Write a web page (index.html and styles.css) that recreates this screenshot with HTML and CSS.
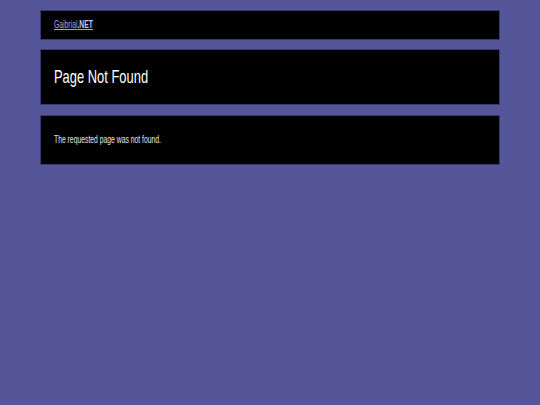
FILE: index.html
```html
<!DOCTYPE html>
<html>
<head>
<meta charset="utf-8">
<title>Page Not Found</title>
<link rel="stylesheet" href="styles.css">
</head>
<body>
<div class="wrap">
  <div class="box header"><a class="site narrow" href="#">Gaibrial<b>.NET</b></a></div>
  <div class="box title"><h1 class="narrow">Page Not Found</h1></div>
  <div class="box content"><p class="narrow">The requested page was not found.</p></div>
</div>
</body>
</html>
```
FILE: styles.css
```css
html, body { margin: 0; padding: 0; }
body {
  background: #555599;
  font-family: "Liberation Sans", Arial, sans-serif;
  color: #fff;
}
.wrap {
  width: 460px;
  margin: 0 auto;
  padding-top: 10px;
  display: flex;
  flex-direction: column;
}
.box {
  background: #000;
  border: 1px solid #3a3a70;
  box-sizing: border-box;
  padding: 0 13px;
  display: flex;
  align-items: center;
}
.narrow {
  display: inline-block;
  transform-origin: left center;
  white-space: nowrap;
}
.header { height: 30px; padding-bottom: 2px; }
.title { height: 56px; margin-top: 9px; }
.content { height: 50px; margin-top: 10px; padding-bottom: 2px; }
.site {
  color: #a4a4f0;
  font-size: 10px;
  text-decoration: underline;
  transform: scaleX(0.68);
}
.site b { font-weight: bold; color: #c4c4ff; }
h1 {
  margin: 0;
  font-weight: normal;
  font-size: 19px;
  transform: scaleX(0.68);
}
p {
  margin: 0;
  font-size: 10px;
  color: #e6e6e6;
  transform: scaleX(0.68);
}
```
